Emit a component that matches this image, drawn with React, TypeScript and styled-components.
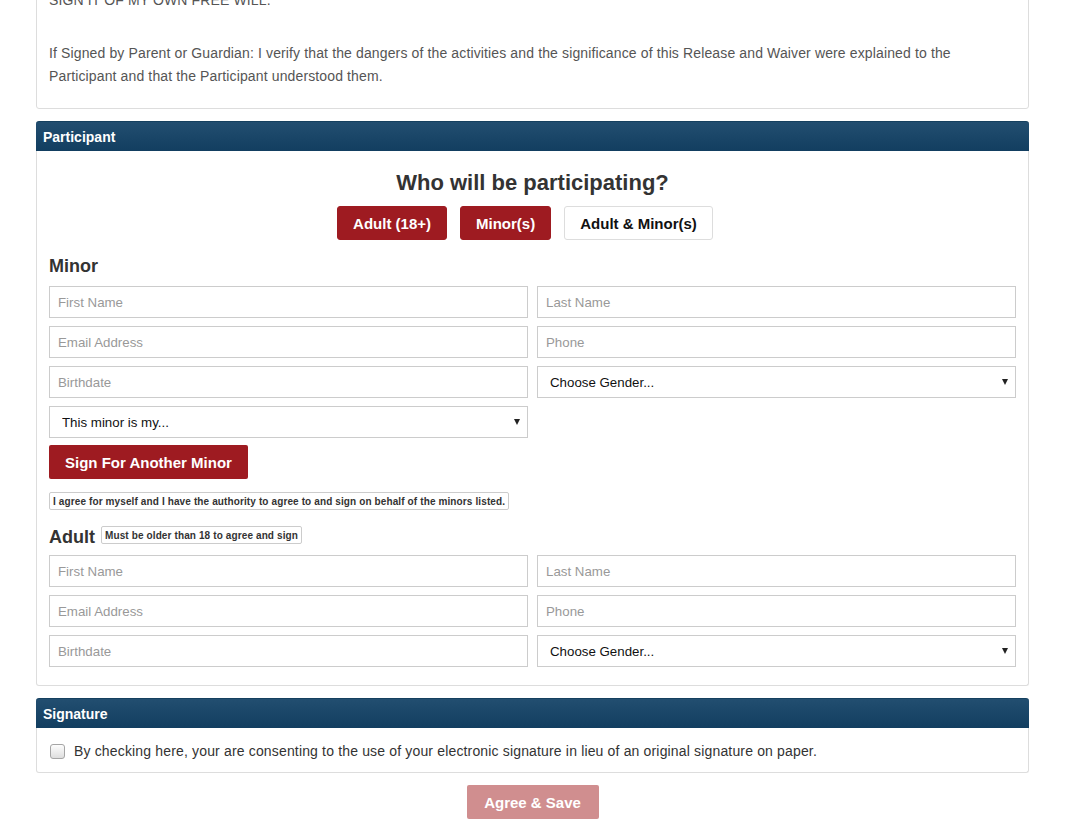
import styled, { createGlobalStyle } from 'styled-components';

const GlobalStyle = createGlobalStyle`
  html, body {
    margin: 0;
    padding: 0;
    background: #fff;
  }
  body {
    font-family: 'Liberation Sans', Arial, sans-serif;
    font-size: 14px;
    color: #333;
  }
  * {
    box-sizing: border-box;
  }
`;

interface ToggleProps {
  $active?: boolean;
}

const App = () => {
  return (
    <>
      <GlobalStyle />
      <Page>
        <TextPanel>
          <Para $gap>SIGN IT OF MY OWN FREE WILL.</Para>
          <Para>
            If Signed by Parent or Guardian: I verify that the dangers of the activities and the
            significance of this Release and Waiver were explained to the
            <br />
            Participant and that the Participant understood them.
          </Para>
        </TextPanel>

        <Section>
          <Heading>Participant</Heading>
          <FormBody>
            <Question>Who will be participating?</Question>
            <ChoiceRow>
              <Choice $active>Adult (18+)</Choice>
              <Choice $active>Minor(s)</Choice>
              <Choice>Adult &amp; Minor(s)</Choice>
            </ChoiceRow>

            <GroupTitle>Minor</GroupTitle>
            <FieldGrid>
              <Field placeholder="First Name" />
              <Field placeholder="Last Name" />
              <Field placeholder="Email Address" />
              <Field placeholder="Phone" />
              <Field placeholder="Birthdate" />
              <SelectWrap>
                <Select defaultValue="">
                  <option value="">Choose Gender...</option>
                </Select>
                <Caret />
              </SelectWrap>
              <SelectWrap>
                <Select defaultValue="">
                  <option value="">This minor is my...</option>
                </Select>
                <Caret />
              </SelectWrap>
            </FieldGrid>
            <AnotherButton>Sign For Another Minor</AnotherButton>
            <Note>
              I agree for myself and I have the authority to agree to and sign on behalf of the
              minors listed.
            </Note>

            <AdultRow>
              <GroupLabel>Adult</GroupLabel>
              <Note $inline>Must be older than 18 to agree and sign</Note>
            </AdultRow>
            <FieldGrid $tight>
              <Field placeholder="First Name" />
              <Field placeholder="Last Name" />
              <Field placeholder="Email Address" />
              <Field placeholder="Phone" />
              <Field placeholder="Birthdate" />
              <SelectWrap>
                <Select defaultValue="">
                  <option value="">Choose Gender...</option>
                </Select>
                <Caret />
              </SelectWrap>
            </FieldGrid>
          </FormBody>
        </Section>

        <Section>
          <Heading>Signature</Heading>
          <SignBody>
            <Consent>
              <Check type="checkbox" />
              By checking here, your are consenting to the use of your electronic signature in
              lieu of an original signature on paper.
            </Consent>
          </SignBody>
        </Section>

        <SaveButton disabled>Agree &amp; Save</SaveButton>
      </Page>
    </>
  );
};

export default App;

// Styles
const Page = styled.div`
  width: 993px;
  margin: -27px 0 0 36px;
  display: flex;
  flex-direction: column;
  gap: 12px;
  padding-bottom: 20px;
`;

const TextPanel = styled.div`
  border: 1px solid #ddd;
  border-radius: 3px;
  padding: 15px 12px 20px;
  color: #555;
`;

const Para = styled.p<{ $gap?: boolean }>`
  margin: 0 0 ${(p) => (p.$gap ? '30px' : '0')};
  line-height: 23px;
  letter-spacing: 0.13px;
`;

const Section = styled.section`
  display: flex;
  flex-direction: column;
`;

const Heading = styled.div`
  height: 30px;
  display: flex;
  align-items: center;
  padding: 0 7px;
  background: linear-gradient(#224e70, #123e60);
  border-top: 1px solid #15405f;
  border-radius: 3px 3px 0 0;
  color: #fff;
  font-weight: bold;
  font-size: 14px;
`;

const FormBody = styled.div`
  display: flex;
  flex-direction: column;
  border: 1px solid #ddd;
  border-top: none;
  border-radius: 0 0 3px 3px;
  padding: 18px 12px 18px;
`;

const Question = styled.h2`
  margin: 0;
  text-align: center;
  font-size: 22px;
  line-height: 28px;
  font-weight: bold;
  color: #333;
`;

const ChoiceRow = styled.div`
  display: flex;
  justify-content: center;
  gap: 13px;
  margin-top: 9px;
  padding-right: 15px;
`;

const Choice = styled.button<ToggleProps>`
  height: 34px;
  padding: 0 15px;
  border-radius: 3px;
  font-family: 'Liberation Sans', Arial, sans-serif;
  font-size: 15px;
  font-weight: bold;
  cursor: pointer;
  border: 1px solid ${(p) => (p.$active ? '#9e1b21' : '#ddd')};
  background: ${(p) => (p.$active ? '#9e1b21' : '#fff')};
  color: ${(p) => (p.$active ? '#fff' : '#111')};
`;

const GroupTitle = styled.h3`
  margin: 15px 0 9px;
  font-size: 18px;
  line-height: 22px;
  font-weight: bold;
  color: #333;
`;

const FieldGrid = styled.div<{ $tight?: boolean }>`
  display: grid;
  grid-template-columns: 1fr 1fr;
  column-gap: 9px;
  row-gap: 8px;
  margin-top: ${(p) => (p.$tight ? '7px' : '0')};
`;

const Field = styled.input`
  height: 32px;
  width: 100%;
  border: 1px solid #ccc;
  border-radius: 0;
  padding: 0 8px;
  font-family: 'Liberation Sans', Arial, sans-serif;
  font-size: 13.3px;
  color: #333;
  outline: none;

  &::placeholder {
    color: #999;
  }
`;

const SelectWrap = styled.div`
  position: relative;
`;

const Select = styled.select`
  appearance: none;
  width: 100%;
  height: 32px;
  border: 1px solid #ccc;
  border-radius: 0;
  background: #fff;
  padding: 0 12px;
  font-family: 'Liberation Sans', Arial, sans-serif;
  font-size: 13.3px;
  color: #111;
  outline: none;
`;

const Caret = styled.span`
  position: absolute;
  right: 8px;
  top: 13px;
  width: 0;
  height: 0;
  border-left: 3.5px solid transparent;
  border-right: 3.5px solid transparent;
  border-top: 6px solid #222;
  pointer-events: none;
`;

const AnotherButton = styled.button`
  align-self: flex-start;
  margin-top: 7px;
  height: 34px;
  padding: 0 16px;
  border: none;
  border-radius: 2px;
  background: #9e1b21;
  color: #fff;
  font-family: 'Liberation Sans', Arial, sans-serif;
  font-size: 15px;
  font-weight: bold;
  cursor: pointer;
`;

const Note = styled.span<{ $inline?: boolean }>`
  align-self: flex-start;
  margin-top: ${(p) => (p.$inline ? '0' : '13px')};
  height: 18px;
  display: inline-flex;
  align-items: center;
  padding: 0 3px;
  border: 1px solid #ccc;
  border-radius: 2px;
  font-size: 10px;
  font-weight: bold;
  letter-spacing: 0.12px;
  color: #333;
  white-space: nowrap;
`;

const AdultRow = styled.div`
  display: flex;
  align-items: center;
  gap: 6px;
  margin-top: 16px;
  height: 22px;
`;

const GroupLabel = styled.h3`
  margin: 0;
  font-size: 18px;
  line-height: 22px;
  font-weight: bold;
  color: #333;
`;

const SignBody = styled.div`
  border: 1px solid #ddd;
  border-top: none;
  border-radius: 0 0 3px 3px;
  padding: 12px 12px 10px;
`;

const Consent = styled.label`
  display: flex;
  align-items: center;
  gap: 9px;
  line-height: 22px;
  font-size: 14px;
  letter-spacing: 0.16px;
  color: #333;
`;

const Check = styled.input`
  appearance: none;
  margin: 0 0 0 1px;
  width: 15px;
  height: 15px;
  border: 1px solid #a5a5a5;
  border-radius: 3px;
  background: linear-gradient(#fdfdfd, #dedede);
`;

const SaveButton = styled.button`
  align-self: center;
  width: 132px;
  height: 34px;
  border: none;
  border-radius: 2px;
  background: #d08e8f;
  color: #fff;
  font-family: 'Liberation Sans', Arial, sans-serif;
  font-size: 15px;
  font-weight: bold;
`;
